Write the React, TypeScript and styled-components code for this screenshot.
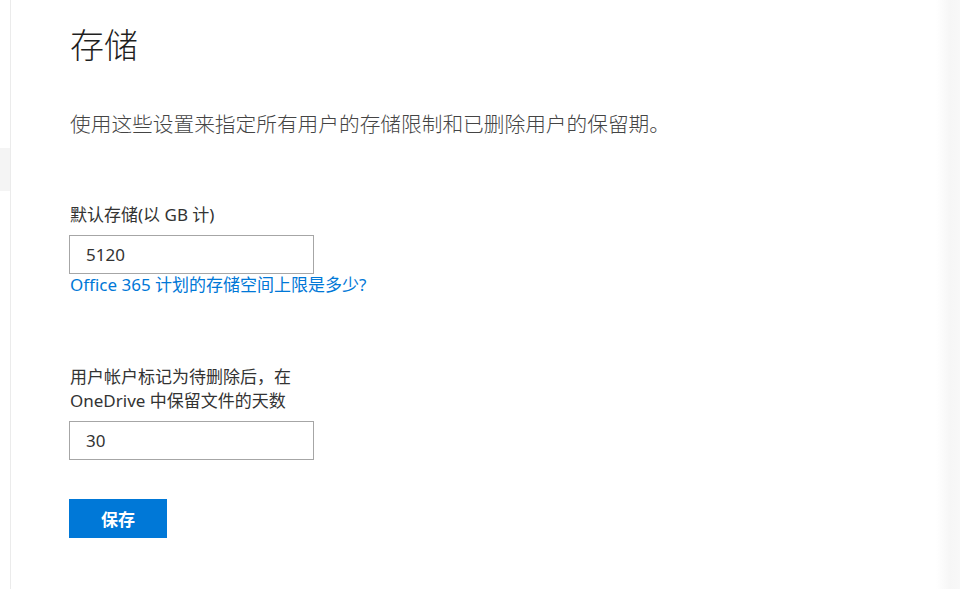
import React from 'react';
import styled, { createGlobalStyle } from 'styled-components';

const GlobalStyle = createGlobalStyle`
  html, body {
    margin: 0;
    padding: 0;
    background: #ffffff;
  }
  body {
    font-family: "Segoe UI", "Noto Sans", "Noto Sans CJK SC", sans-serif;
    color: #333333;
  }
`;

const Page = styled.div`
  display: flex;
  width: 960px;
  height: 589px;
  overflow: hidden;
  background: #ffffff;
`;

const LeftRail = styled.div`
  width: 10px;
  flex-shrink: 0;
  border-right: 1px solid #ebebeb;
  display: flex;
  flex-direction: column;
`;

const RailItem = styled.div`
  margin-top: 148px;
  height: 43px;
  background: #f4f4f4;
`;

const Main = styled.main`
  flex: 1;
  padding: 22px 0 0 59px;
  display: flex;
  flex-direction: column;
  align-items: flex-start;
`;

const RightShade = styled.div`
  width: 24px;
  flex-shrink: 0;
  background: linear-gradient(to right, #ffffff, #f6f6f6 60%, #f8f8f8);
`;

const Title = styled.h1`
  margin: 0;
  font-size: 34px;
  font-weight: 300;
  line-height: 46px;
  color: #1f1f1f;
`;

const Description = styled.p`
  margin: 42px 0 0;
  font-size: 20.7px;
  font-weight: 300;
  line-height: 28px;
  color: #444444;
`;

const Field = styled.div<{ $top: number }>`
  margin-top: ${(p) => p.$top}px;
  display: flex;
  flex-direction: column;
  align-items: flex-start;
`;

const Label = styled.label`
  font-size: 17px;
  line-height: 24px;
  color: #333333;
  margin-bottom: 8px;
`;

const Input = styled.input`
  box-sizing: border-box;
  width: 245px;
  height: 39px;
  margin: 0 0 0 -1px;
  padding: 0 16px;
  border: 1px solid #a6a6a6;
  border-radius: 0;
  font-family: inherit;
  font-size: 17px;
  color: #333333;
  background: #ffffff;
  outline: none;
`;

const HelpLink = styled.a`
  margin-top: -1px;
  font-size: 17px;
  line-height: 24px;
  color: #0078d7;
  text-decoration: none;
  cursor: pointer;
`;

const SaveButton = styled.button`
  margin: 39px 0 0 -1px;
  width: 98px;
  height: 39px;
  border: none;
  border-radius: 0;
  background: #0078d7;
  color: #ffffff;
  font-family: inherit;
  font-size: 17px;
  font-weight: 700;
  cursor: pointer;
`;

const App: React.FC = () => {
  return (
    <>
      <GlobalStyle />
      <Page>
        <LeftRail>
          <RailItem />
        </LeftRail>
        <Main>
          <Title>存储</Title>
          <Description>使用这些设置来指定所有用户的存储限制和已删除用户的保留期。</Description>

          <Field $top={65}>
            <Label>默认存储(以 GB 计)</Label>
            <Input defaultValue="5120" />
            <HelpLink>Office 365 计划的存储空间上限是多少?</HelpLink>
          </Field>

          <Field $top={68}>
            <Label>
              用户帐户标记为待删除后，在
              <br />
              OneDrive 中保留文件的天数
            </Label>
            <Input defaultValue="30" />
          </Field>

          <SaveButton>保存</SaveButton>
        </Main>
        <RightShade />
      </Page>
    </>
  );
};

export default App;
